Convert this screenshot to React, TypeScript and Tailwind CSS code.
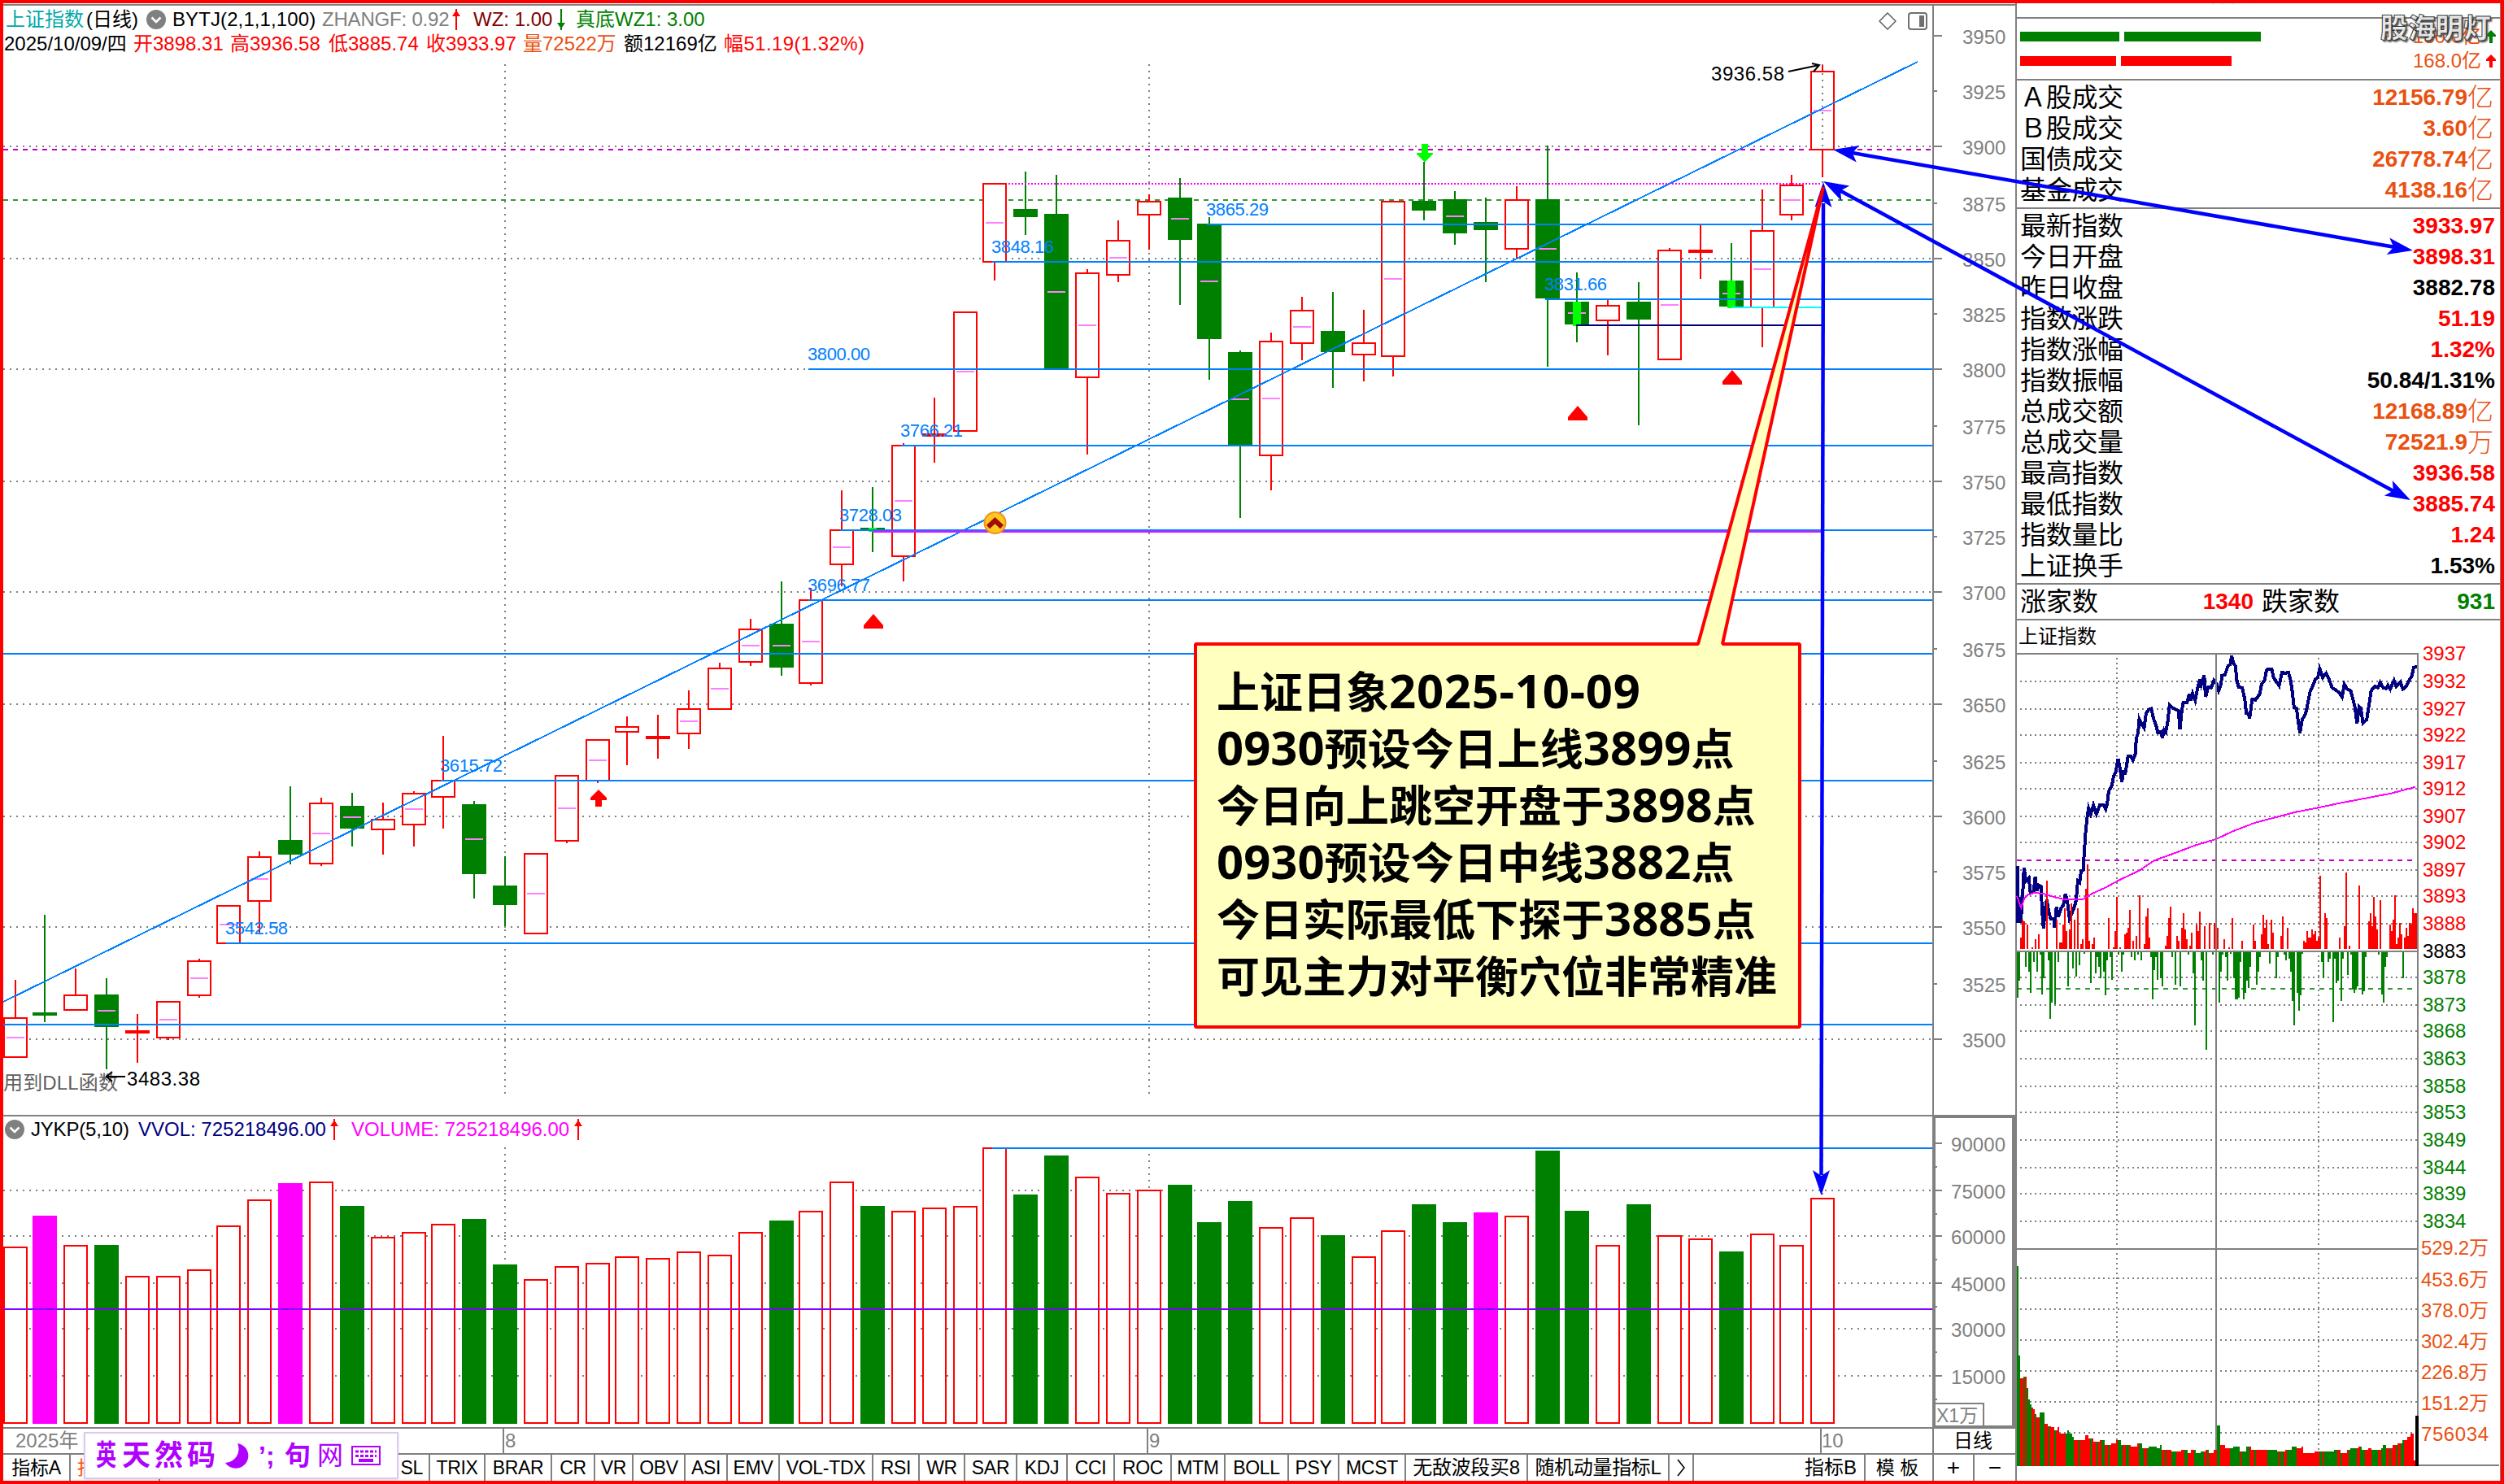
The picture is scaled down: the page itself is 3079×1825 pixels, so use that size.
import React from "react";

type Kind = "R" | "G" | "T";
// kind, body top, body bottom, high, low, show mid mark
type Candle = [Kind, number, number, number, number, number];

const RED = "#ff0000";
const GREEN = "#008000";
const GRAY = "#808080";
const BLUE = "#0080ff";
const MAGENTA = "#ff00ff";

const candles: Candle[] = [
  ["R", 1251, 1301, 1205, 1301, 1], ["G", 1245, 1249, 1125, 1257, 0], ["R", 1223, 1243, 1191, 1243, 0],
  ["G", 1223, 1263, 1203, 1315, 1], ["T", 1267, 1271, 1247, 1307, 0], ["R", 1231, 1277, 1231, 1279, 1],
  ["R", 1181, 1225, 1179, 1227, 1], ["R", 1113, 1161, 1113, 1161, 1], ["R", 1053, 1109, 1047, 1147, 1],
  ["G", 1033, 1051, 967, 1063, 0], ["R", 987, 1063, 981, 1065, 1], ["G", 991, 1019, 975, 1041, 1],
  ["R", 1007, 1021, 987, 1051, 0], ["R", 975, 1015, 973, 1041, 1], ["R", 959, 981, 905, 1019, 0],
  ["G", 989, 1075, 985, 1105, 1], ["G", 1089, 1113, 1053, 1139, 0], ["R", 1049, 1149, 1049, 1149, 1],
  ["R", 953, 1035, 953, 1037, 1], ["R", 909, 961, 909, 963, 1], ["R", 893, 901, 881, 941, 0],
  ["T", 905, 909, 879, 933, 0], ["R", 871, 903, 849, 921, 1], ["R", 821, 873, 815, 873, 1],
  ["R", 773, 815, 761, 819, 1], ["G", 767, 821, 715, 831, 1], ["R", 737, 841, 723, 843, 1],
  ["R", 651, 695, 603, 721, 1], ["G", 649, 652, 599, 679, 0], ["R", 547, 685, 545, 715, 1],
  ["T", 533, 537, 489, 569, 0], ["R", 383, 531, 383, 531, 1], ["R", 225, 323, 225, 345, 1],
  ["G", 257, 267, 211, 289, 0], ["G", 263, 454, 215, 454, 1], ["R", 335, 465, 331, 559, 1],
  ["R", 295, 339, 271, 347, 1], ["R", 247, 265, 239, 307, 0], ["G", 243, 295, 219, 375, 1],
  ["G", 275, 417, 267, 467, 1], ["G", 433, 548, 431, 637, 1], ["R", 419, 561, 409, 603, 1],
  ["R", 381, 423, 365, 443, 1], ["G", 407, 433, 359, 477, 0], ["R", 421, 437, 381, 469, 0],
  ["R", 247, 439, 247, 463, 1], ["G", 247, 259, 199, 271, 0], ["G", 245, 287, 235, 301, 1],
  ["G", 273, 283, 243, 347, 0], ["R", 245, 307, 229, 318, 0], ["G", 245, 367, 179, 451, 1],
  ["G", 371, 399, 335, 421, 1], ["R", 375, 395, 368, 437, 0], ["G", 371, 393, 347, 523, 0],
  ["R", 307, 443, 305, 443, 1], ["T", 307, 311, 277, 343, 0], ["G", 345, 377, 299, 377, 1],
  ["R", 283, 379, 233, 427, 1], ["R", 227, 265, 215, 271, 1], ["R", 87, 185, 80, 218, 1],
];

const volumes: [string, number][] = [
  ["R", 1533], ["M", 1495], ["R", 1531], ["G", 1531], ["R", 1569], ["R", 1569], ["R", 1561], ["R", 1507],
  ["R", 1475], ["M", 1455], ["R", 1453], ["G", 1483], ["R", 1521], ["R", 1515], ["R", 1505], ["G", 1499],
  ["G", 1555], ["R", 1573], ["R", 1557], ["R", 1553], ["R", 1545], ["R", 1547], ["R", 1539], ["R", 1543],
  ["R", 1515], ["G", 1501], ["R", 1489], ["R", 1453], ["G", 1483], ["R", 1489], ["R", 1485], ["R", 1483],
  ["R", 1411], ["G", 1469], ["G", 1421], ["R", 1447], ["R", 1467], ["R", 1463], ["G", 1457], ["G", 1503],
  ["G", 1477], ["R", 1509], ["R", 1497], ["G", 1519], ["R", 1545], ["R", 1513], ["G", 1481], ["G", 1503],
  ["M", 1491], ["R", 1495], ["G", 1415], ["G", 1489], ["R", 1531], ["G", 1481], ["R", 1519], ["R", 1523],
  ["G", 1539], ["R", 1517], ["R", 1531], ["R", 1473],
];

const shifts = [1, 7, 14, 20, 26, 32, 39, 45, 51, 58];
const cx = (i: number) => 19 + 38 * i - 2 * shifts.filter((s) => s <= i).length;

const priceTicks: [number, number][] = [
  [3950, 44], [3925, 112], [3900, 180], [3875, 250], [3850, 318], [3825, 386], [3800, 454], [3775, 524],
  [3750, 592], [3725, 660], [3700, 728], [3675, 798], [3650, 866], [3625, 936], [3600, 1004], [3575, 1072],
  [3550, 1140], [3525, 1210], [3500, 1278],
];

const levels: [string, number, number, number][] = [
  ["3542.58", 278, 1160, 1141], ["3615.72", 542, 960, 941], ["3696.77", 994, 738, 719],
  ["3728.03", 1033, 652, 633], ["3766.21", 1108, 548, 529], ["3800.00", 994, 454, 435],
  ["3848.16", 1220, 322, 303], ["3831.66", 1900, 368, 349], ["3865.29", 1484, 276, 257],
];

function PriceChart() {
  return (
    <svg className="block shrink-0" width="2372" height="1301" viewBox="4 70 2372 1301" shapeRendering="crispEdges">
      <g stroke={GRAY} strokeWidth="2" strokeDasharray="2 6">
        {priceTicks.filter(([p]) => p % 50 === 0 && p < 3950).map(([p, y]) => (
          <line key={p} x1="4" x2="2376" y1={y} y2={y} />
        ))}
        <line x1="621" x2="621" y1="79" y2="1346" />
        <line x1="1413" x2="1413" y1="79" y2="1346" />
        <line x1="2241" x2="2241" y1="79" y2="1346" />
      </g>
      <line x1="4" x2="2376" y1="184" y2="184" stroke="#c000c0" strokeWidth="2" strokeDasharray="6 6" />
      <line x1="4" x2="2376" y1="246" y2="246" stroke="#339933" strokeWidth="2" strokeDasharray="6 6" />
      {candles.map(([k, t, b, h, l, m], i) => {
        const x = cx(i);
        const c = k === "G" ? GREEN : RED;
        return (
          <g key={i}>
            {h < t && <rect x={x - 1} y={h} width="2" height={t - h} fill={c} />}
            {l > b && <rect x={x - 1} y={b} width="2" height={l - b} fill={c} />}
            {k === "R" ? (
              <rect x={x - 14} y={t + 1} width="28" height={b - t - 2} fill="#ffffff" stroke={RED} strokeWidth="2" />
            ) : (
              <rect x={x - 15} y={t} width="30" height={b - t} fill={c} />
            )}
            {m === 1 && <rect x={x - 11} y={Math.round((t + b) / 2) - 1} width="22" height="2" fill="#ff80ff" />}
          </g>
        );
      })}
      <line x1="2241" x2="2241" y1="90" y2="184" stroke={GRAY} strokeWidth="2" strokeDasharray="2 6" />
      <rect x="1934" y="371" width="10" height="30" fill="#00ff00" />
      <rect x="2124" y="345" width="10" height="34" fill="#00ff00" />
      <rect x="1068" y="649" width="10" height="5" fill="#00ff00" />
      <g stroke={BLUE} strokeWidth="2">
        <line x1="4" x2="2376" y1="1260" y2="1260" />
        <line x1="4" x2="2376" y1="804" y2="804" />
        {levels.map(([n, x, y]) => <line key={n} x1={x} x2="2376" y1={y} y2={y} />)}
        <line x1="4" y1="1232" x2="2358" y2="76" />
      </g>
      <rect x="1073" y="653" width="1167" height="2" fill={MAGENTA} />
      <line x1="1240" x2="2240" y1="226" y2="226" stroke={MAGENTA} strokeWidth="2" strokeDasharray="2 2" />
      <line x1="2129" x2="2240" y1="378" y2="378" stroke="#00ffff" strokeWidth="2" />
      <line x1="1938" x2="2240" y1="400" y2="400" stroke="#000080" strokeWidth="2" />
      <g fill={BLUE} fontSize="22">
        {levels.map(([n, x, , ty]) => (
          <text key={n} x={x - 1} y={ty + 8} textLength="77">{n}</text>
        ))}
      </g>
      <g fill={RED} shapeRendering="auto">
        <path d="M1074 755L1062 769V773H1086V769Z" />
        <path d="M1940 499L1928 513V517H1952V513Z" />
        <path d="M2130 455L2118 469V473H2142V469Z" />
        <path d="M736 971L726 981V984H732V992H740V984H746V981Z" />
      </g>
      <path d="M1748 177H1756V188H1762V190L1752 199L1742 190V188H1748Z" fill="#00ff00" />
      <g shapeRendering="auto">
        <circle cx="1223.500" cy="643" r="13" fill="#ffc81e" stroke="#f09020" strokeWidth="2" />
        <path d="M1215 648L1223.500 640L1232 648" fill="none" stroke="#a00c08" strokeWidth="6" />
      </g>
      <g fill="#000000" stroke="none" fontSize="24">
        <text x="2104" y="99" textLength="90">3936.58</text>
        <text x="156" y="1335" textLength="90">3483.38</text>
      </g>
      <text x="4" y="1340" fill="#606060" fontSize="24" textLength="141">用到DLL函数</text>
      <g stroke="#000000" strokeWidth="2" fill="none" shapeRendering="auto">
        <path d="M2199 88L2237 80M2228 78L2237 80L2230 88" />
        <path d="M154 1324H130M138 1318L131 1324L138 1330" />
      </g>
    </svg>
  );
}

function PriceAxis() {
  return (
    <svg className="block" width="100" height="1364" viewBox="2378 7 100 1364" shapeRendering="crispEdges">
      {priceTicks.map(([p, y]) => (
        <g key={p}>
          <rect x="2378" y={y - 1} width={p % 50 === 0 ? 10 : 4} height="2" fill={GRAY} />
          <text x="2413" y={y + 10} fontSize="24" fill={GRAY}>{p}</text>
        </g>
      ))}
    </svg>
  );
}

function VolumeChart() {
  const fills: Record<string, string> = { G: GREEN, M: MAGENTA };
  return (
    <svg className="block" width="2372" height="348" viewBox="4 1407 2372 348" shapeRendering="crispEdges">
      <g stroke={GRAY} strokeWidth="2">
        {[1464, 1520, 1578, 1634, 1692].map((y) => (
          <line key={y} x1="4" x2="2376" y1={y} y2={y} strokeDasharray="2 6" />
        ))}
        {[621, 1413, 2241].map((x) => (
          <line key={x} x1={x} x2={x} y1="1411" y2="1751" strokeDasharray="2 6" />
        ))}
      </g>
      {volumes.map(([k, t], i) =>
        k === "R" ? (
          <rect key={i} x={cx(i) - 14} y={t + 1} width="28" height={1750 - t - 1} fill="#ffffff" stroke={RED} strokeWidth="2" />
        ) : (
          <rect key={i} x={cx(i) - 15} y={t} width="30" height={1751 - t} fill={fills[k]} />
        )
      )}
      <line x1="1220" x2="2376" y1="1412" y2="1412" stroke={BLUE} strokeWidth="2" />
      <line x1="4" x2="2376" y1="1610" y2="1610" stroke="#8000ff" strokeWidth="2" />
    </svg>
  );
}

function VolumeAxis() {
  const rows: [string, number][] = [["90000", 1406], ["75000", 1464], ["60000", 1520], ["45000", 1578], ["30000", 1634], ["15000", 1692]];
  return (
    <svg className="block" width="102" height="386" viewBox="2376 1371 102 386" shapeRendering="crispEdges">
      <rect x="2378" y="1373" width="98" height="382" fill="none" stroke={GRAY} strokeWidth="4" />
      {rows.map(([n, y]) => (
        <g key={n}>
          <rect x="2380" y={y - 1} width="8" height="2" fill={GRAY} />
          <rect x="2380" y={y + 28} width="2" height="2" fill={GRAY} />
          <text x="2399" y={y + 10} fontSize="24" fill={GRAY} textLength="67">{n}</text>
        </g>
      ))}
      <rect x="2379" y="1726" width="60" height="28" fill="#ffffff" stroke={GRAY} strokeWidth="2" />
      <text x="2381" y="1749" fontSize="23" fill={GRAY}>X1万</text>
    </svg>
  );
}

const redBars = "272:1100,277:1040,281:1045,290:1055,303:1133,311:1105,320:1088,342:905,368:1040,377:1117,381:1117,386:1055,390:1000,394:1078,403:1072,408:983,417:1040,425:1000,434:1122,438:1106,447:932,451:848,455:1112,464:1122,468:1100,508:1033,521:1133,526:1078,530:960,538:1133,552:1090,556:1083,560:1067,565:1005,574:1112,582:1095,590:955,604:1122,608:1028,613:1000,617:1100,661:1128,665:1095,670:1033,674:994,691:1095,696:1112,705:1067,709:1016,713:1072,718:1106,726:1128,731:1083,744:1055,748:1078,752:1010,766:1060,779:1050,792:1050,800:1067,818:1106,831:1133,840:1033,866:1112,896:1055,900:1112,918:1090,922:1022,927:1067,931:1038,935:1122,944:1038,948:1083,970:1095,975:1028,988:1067,1031:1112,1036:1117,1040:1078,1044:1100,1049:1100,1053:1072,1057:1090,1062:1078,1066:1112,1071:1100,1075:888,1088:1016,1092:1033,1127:1100,1140:1060,1145:877,1153:1128,1180:921,1206:1045,1210:1016,1215:1060,1219:960,1223:1028,1228:1072,1236:972,1263:1055,1267:1078,1271:1038,1276:955,1280:1122,1284:1100,1289:1050,1293:1088,1302:1100,1306:1067,1311:1095,1315:1050,1319:1055,1324:1000,1328:1016,1332:1016,1336:1022";
const greenBars = "264:1308,268:1250,285:1200,294:1217,298:1290,307:1184,316:1217,325:1160,329:1295,333:1240,346:1178,351:1380,355:1323,364:1330,373:1184,399:1268,412:1206,420:1235,430:1195,442:1155,460:1256,473:1223,478:1167,482:1200,486:1240,495:1217,499:1300,504:1178,512:1167,517:1245,534:1160,543:1217,548:1160,569:1167,578:1178,587:1160,596:1178,622:1167,626:1312,630:1212,635:1167,639:1245,648:1240,652:1268,678:1167,687:1262,700:1268,722:1160,735:1223,739:1402,757:1178,761:1250,770:1486,787:1160,805:1323,809:1217,813:1160,822:1167,826:1250,835:1155,844:1240,848:1312,853:1312,857:1308,861:1184,870:1312,874:1290,879:1250,883:1273,887:1200,905:1262,909:1217,913:1167,940:1190,957:1240,962:1167,979:1160,984:1178,992:1172,997:1217,1001:1318,1006:1402,1014:1290,1019:1352,1023:1300,1027:1155,1080:1184,1084:1240,1097:1184,1101:1172,1110:1391,1114:1172,1119:1256,1123:1250,1132:1318,1136:1172,1149:1228,1158:1160,1162:1278,1167:1290,1171:1280,1175:1268,1189:1295,1193:1284,1197:1167,1232:1160,1241:1295,1245:1323,1250:1200,1254:1167,1298:1240";
const priceLine = "264,855 264,1050 268,960 272,1050 277,960 281,860 286,905 294,895 298,945 307,940 311,890 315,940 320,920 327,925 329,1000 333,1068 338,1000 342,970 347,1010 352,1035 361,1035 363,1065 368,995 373,1028 380,1000 386,990 392,950 397,975 403,1035 410,1015 417,990 421,970 425,905 430,910 434,872 440,868 442,815 446,740 450,690 454,655 460,675 467,645 475,675 484,645 495,645 500,658 504,640 508,597 517,575 521,545 527,530 533,485 538,515 543,565 548,525 552,540 560,475 567,475 573,490 579,470 582,415 587,395 590,348 596,365 603,378 608,330 615,315 622,312 628,345 635,370 640,395 648,392 652,412 657,385 661,392 666,360 671,300 680,310 695,320 699,383 704,320 708,290 718,290 724,262 728,284 733,260 740,284 745,250 752,212 756,230 764,198 768,272 775,238 783,240 790,215 797,225 803,250 809,230 812,198 820,195 828,165 834,160 838,130 842,155 848,165 851,210 856,238 866,240 873,280 877,328 882,330 886,345 893,280 902,282 913,262 918,228 926,215 931,180 936,175 945,175 950,205 957,218 965,233 973,187 981,190 990,187 996,215 1001,260 1005,308 1012,312 1016,355 1021,396 1027,350 1036,330 1041,300 1048,255 1055,235 1062,212 1069,205 1074,175 1082,205 1091,190 1098,208 1107,240 1116,247 1127,258 1134,272 1140,228 1147,245 1157,250 1164,285 1168,305 1174,362 1180,305 1184,310 1190,362 1200,350 1206,300 1212,250 1222,235 1230,240 1236,222 1244,240 1252,243 1257,232 1263,245 1273,215 1279,235 1290,220 1297,245 1306,235 1314,213 1321,200 1326,170 1337,168";
const avgLine = "262,958 268,980 273,998 282,965 292,953 310,946 335,950 360,960 385,968 440,968 462,950 500,928 540,900 590,870 630,835 680,812 740,783 797,761 840,735 900,705 960,685 1010,668 1071,653 1130,637 1200,620 1265,604 1330,582";
const volSteps: [number, number][] = [
  [264, 768], [268, 1097], [274, 1180], [280, 1174], [288, 1216], [293, 1257], [298, 1275], [303, 1287], [308, 1293], [312, 1311], [318, 1322], [325, 1305], [333, 1305], [340, 1347], [348, 1356], [356, 1360], [363, 1372], [371, 1360], [378, 1383], [390, 1383], [397, 1370], [405, 1383], [412, 1395], [418, 1407], [440, 1407], [447, 1389], [455, 1400], [470, 1413], [485, 1407], [500, 1425], [515, 1419], [530, 1407], [545, 1425], [570, 1430], [588, 1419], [600, 1437], [615, 1430], [640, 1437], [646, 1425], [652, 1443], [680, 1449], [705, 1443], [720, 1455], [732, 1443], [745, 1455], [755, 1449], [768, 1443], [780, 1455], [790, 1443], [801, 1353], [808, 1425], [820, 1437], [845, 1430], [860, 1449], [877, 1431], [890, 1443], [960, 1449], [985, 1443], [1000, 1431], [1015, 1437], [1025, 1431], [1032, 1455], [1060, 1449], [1095, 1449], [1115, 1443], [1130, 1455], [1150, 1443], [1160, 1437], [1178, 1431], [1190, 1443], [1205, 1437], [1215, 1443], [1240, 1437], [1247, 1425], [1255, 1437], [1270, 1425], [1285, 1419], [1296, 1407], [1305, 1407], [1312, 1395], [1321, 1383], [1328, 1483],
];
const greenVol: [number, number][] = [[262, 269], [281, 285], [290, 300], [308, 312], [322, 336], [344, 350], [361, 365], [391, 413], [429, 433], [459, 464], [474, 478], [490, 498], [507, 511], [533, 546], [556, 562], [590, 602], [612, 650], [660, 664], [675, 690], [712, 718], [738, 762], [770, 776], [797, 806], [833, 858], [864, 886], [898, 904], [935, 962], [968, 976], [988, 1012], [1075, 1082], [1088, 1122], [1132, 1136], [1150, 1174], [1184, 1196], [1214, 1232], [1238, 1252], [1262, 1266], [1280, 1284], [1292, 1302]];

const ix = (v: number) => 2360 + v / 2.181;
const iy = (v: number) => 760 + v / 2.8;
const vy = (v: number) => 1300 + v / 2.987;
const mapLine = (s: string) => s.split(" ").map((p) => { const [a, b] = p.split(",").map(Number); return `${ix(a).toFixed(1)},${iy(b).toFixed(1)}`; }).join(" ");
const parseBars = (s: string) => s.split(",").map((p) => p.split(":").map(Number));

const minuteTicks: [string, number, string][] = [
  ["3937", 804, RED], ["3932", 838, RED], ["3927", 872, RED], ["3922", 904, RED], ["3917", 938, RED], ["3912", 970, RED],
  ["3907", 1004, RED], ["3902", 1036, RED], ["3897", 1070, RED], ["3893", 1102, RED], ["3888", 1136, RED], ["3883", 1170, "#000000"],
  ["3878", 1202, GREEN], ["3873", 1236, GREEN], ["3868", 1268, GREEN], ["3863", 1302, GREEN], ["3858", 1336, GREEN], ["3853", 1368, GREEN],
  ["3849", 1402, GREEN], ["3844", 1436, GREEN], ["3839", 1468, GREEN], ["3834", 1502, GREEN],
];
const minuteVol: [string, number][] = [["529.2万", 1536], ["453.6万", 1575], ["378.0万", 1613], ["302.4万", 1651], ["226.8万", 1689], ["151.2万", 1727], ["756034", 1765]];

function IntradayChart() {
  const bars: React.ReactElement[] = [];
  for (let k = 0, v = 264; v < 1331; v += 4.362, k++) {
    let top = 768;
    for (const [sx, sy] of volSteps) if (sx <= v + 2) top = sy;
    const g = greenVol.some(([a, b]) => v >= a && v <= b);
    const x = 2480 + k * 2;
    bars.push(<rect key={k} x={x} y={vy(top)} width="2" height={vy(1501) - vy(top)} fill={g ? GREEN : RED} />);
  }
  return (
    <svg className="block shrink-0 overflow-visible" width="595" height="1018" viewBox="2480 803 595 1018" shapeRendering="crispEdges">
      <g stroke={GRAY} strokeWidth="2">
        {minuteTicks.slice(1).filter(([n]) => n !== "3883").map(([n, y]) => (
          <line key={n} x1="2484" x2="2973" y1={y} y2={y} strokeDasharray="2 4" />
        ))}
        {[1572, 1610, 1648, 1686, 1724, 1762].map((y) => (
          <line key={y} x1="2484" x2="2973" y1={y} y2={y} strokeDasharray="2 4" />
        ))}
        <line x1="2603" x2="2603" y1="809" y2="1800" strokeDasharray="2 4" />
        <line x1="2851" x2="2851" y1="809" y2="1800" strokeDasharray="2 4" />
      </g>
      <line x1="2480" x2="2969" y1="1058" y2="1058" stroke="#c000c0" strokeWidth="2" strokeDasharray="6 6" />
      <line x1="2480" x2="2969" y1="1216" y2="1216" stroke="#339933" strokeWidth="2" strokeDasharray="6 6" />
      <polyline points={mapLine(priceLine)} fill="none" stroke="#000080" strokeWidth="4" />
      {parseBars(redBars).map(([x, t]) => (
        <rect key={x} x={Math.round(ix(x)) - 1} y={iy(t)} width="2" height={1167 - iy(t)} fill={RED} />
      ))}
      {parseBars(greenBars).map(([x, b]) => (
        <rect key={x} x={Math.round(ix(x)) - 1} y="1169" width="2" height={iy(b) - 1169} fill={GREEN} />
      ))}
      <polyline points={mapLine(avgLine)} fill="none" stroke={MAGENTA} strokeWidth="2" />
      <g fill={GRAY}>
        <rect x="2480" y="803" width="494" height="2" />
        <rect x="2724" y="804" width="2" height="996" />
        <rect x="2972" y="804" width="2" height="997" />
        <rect x="2480" y="1169" width="494" height="2" />
        <rect x="2480" y="1535" width="494" height="2" />
        <rect x="2974" y="1801" width="99" height="2" />
      </g>
      {bars}
      <rect x="2970" y="1741" width="4" height="62" fill="#000000" />
      {minuteTicks.map(([n, y, c]) => <text key={n} x="2979" y={y + 8} fontSize="24" fill={c}>{n}</text>)}
      {minuteVol.map(([n, y]) => <text key={n} x="2977" y={y + 7} fontSize="24" textLength={n.length > 6 ? undefined : 83} fill="#ea5010">{n}</text>)}
    </svg>
  );
}

function QuoteRow({ label, value, unit, tone }: { label: string; value: string; unit?: string; tone: string }) {
  return (
    <div className={`flex h-[38px] items-center justify-between pl-1 ${unit ? "pr-[8px]" : "pr-[6px]"}`}>
      <span className="text-[32px] leading-[38px] tracking-[-0.3px] text-black">{label}</span>
      <span className={`flex items-center leading-[38px] ${tone}`}>
        <b className="text-[28px]">{value}</b>
        {unit && <span className="text-[32px] font-light">{unit}</span>}
      </span>
    </div>
  );
}

function Collapse() {
  return (
    <svg className="shrink-0" width="24" height="24" viewBox="0 0 24 24">
      <circle cx="12" cy="12" r="12" fill={GRAY} />
      <path d="M6.500 9.500L12 15L17.500 9.500" fill="none" stroke="#fff" strokeWidth="2.500" />
    </svg>
  );
}

function Arrow({ color, down = false, thin = true }: { color: string; down?: boolean; thin?: boolean }) {
  return (
    <svg className={`shrink-0 ${down ? "rotate-180" : ""}`} width={thin ? 10 : 12} height={thin ? 26 : 16} viewBox={thin ? "0 0 10 26" : "0 0 12 16"}>
      {thin ? <path d="M4 0H6V3L10 9H6V26H4V9H0L4 3Z" fill={color} /> : <path d="M6 0L12 6V8H8V16H4V8H0V6Z" fill={color} />}
    </svg>
  );
}

function Slot({ w, c, children }: { w: string; c: string; children: React.ReactNode }) {
  return <span className={`shrink-0 ${w} ${c}`}>{children}</span>;
}

const tabs: [string, string, string][] = [
  ["w-[83px]", "指标A", "text-black"], ["w-[110px]", "指", "text-[#ff5000] pl-2 !justify-start"], ["w-[332px]", "SL", "text-black !justify-end pr-[7px]"],
  ["w-[68px]", "TRIX", ""], ["w-[82px]", "BRAR", ""], ["w-[53px]", "CR", ""], ["w-[47px]", "VR", ""], ["w-[64px]", "OBV", ""], ["w-[52px]", "ASI", ""],
  ["w-[64px]", "EMV", ""], ["w-[115px]", "VOL-TDX", ""], ["w-[57px]", "RSI", ""], ["w-[56px]", "WR", ""], ["w-[64px]", "SAR", ""], ["w-[62px]", "KDJ", ""],
  ["w-[58px]", "CCI", ""], ["w-[70px]", "ROC", ""], ["w-[66px]", "MTM", ""], ["w-[78px]", "BOLL", ""], ["w-[62px]", "PSY", ""], ["w-[82px]", "MCST", ""],
  ["w-[150px]", "无敌波段买8", "text-[24px]"], ["w-[174px]", "随机动量指标L", "text-[24px]"],
];

function ArrowTip({ x, y, a }: { x: number; y: number; a: number }) {
  return <path d="M0 0L-31 -10.500L-24 0L-31 10.500Z" fill="#0000ff" transform={`translate(${x} ${y}) rotate(${a})`} />;
}

const noteLines = [
  ["上证日象", "2025-10-09"], ["0930", "预设今日上线", "3899", "点"], ["今日向上跳空开盘于", "3898", "点"],
  ["0930", "预设今日中线", "3882", "点"], ["今日实际最低下探于", "3885", "点"], ["可见主力对平衡穴位非常精准"],
];

export default function App() {
  return (
    <div className="relative flex h-[1825px] w-[3079px] overflow-hidden border-4 border-[#ff0000] bg-white font-['Liberation_Sans','Noto_Sans_CJK_SC',sans-serif] text-[24px] text-black">
      <main className="flex w-[2476px] shrink-0 flex-col border-r-2 border-[#808080]">
        <section className="mt-px flex h-[1366px] border-t-2 border-[#808080]">
          <div className="flex w-[2374px] flex-col border-r-2 border-[#808080]">
            <header className="flex h-[63px] shrink-0 justify-between whitespace-nowrap">
              <div>
                <div className="flex h-[34px] items-center pl-[3px] leading-[34px]">
                  <Slot w="w-[99px]" c="text-[#00a8a8]">上证指数</Slot>
                  <Slot w="w-[74px]" c="">(日线)</Slot>
                  <Collapse />
                  <Slot w="w-[188px]" c="pl-[8px] tracking-[0.1px]">BYTJ(2,1,1,100)</Slot>
                  <Slot w="w-[164px]" c="text-[#808080] tracking-[-0.2px]"><span className="ml-1">ZHANGF: 0.92</span></Slot>
                  <Arrow color={RED} />
                  <Slot w="w-[119px]" c="pl-[16px] text-[#800000]">WZ: 1.00</Slot>
                  <Arrow color={GREEN} down />
                  <Slot w="w-[190px]" c="pl-[13px] text-[#008000]">真底WZ1: 3.00</Slot>
                </div>
                <div className="flex h-[26px] items-center pl-px leading-[26px]">
                  <Slot w="w-[159px]" c="">2025/10/09/四</Slot>
                  <Slot w="w-[119px]" c="text-[#ff0000]">开3898.31</Slot>
                  <Slot w="w-[121px]" c="text-[#ff0000]">高3936.58</Slot>
                  <Slot w="w-[120px]" c="text-[#ff0000]">低3885.74</Slot>
                  <Slot w="w-[119px]" c="text-[#ff0000]">收3933.97</Slot>
                  <Slot w="w-[124px]" c="text-[#ea5010]">量72522万</Slot>
                  <Slot w="w-[123px]" c="">额12169亿</Slot>
                  <Slot w="w-[180px]" c="text-[#ff0000] tracking-[0.4px]">幅51.19(1.32%)</Slot>
                </div>
              </div>
              <div className="flex gap-[14px] pr-[6px] pt-[8px]">
                <svg width="22" height="22" viewBox="0 0 22 22"><path d="M11 1L21 11L11 21L1 11Z" fill="none" stroke="#606060" strokeWidth="1.500" /></svg>
                <svg width="24" height="22" viewBox="0 0 24 22"><rect x="1" y="1" width="22" height="20" rx="3" fill="none" stroke="#707070" strokeWidth="2" /><rect x="14" y="4" width="6" height="14" fill="#707070" /></svg>
              </div>
            </header>
            <PriceChart />
          </div>
          <PriceAxis />
        </section>
        <section className="flex h-[386px]">
          <div className="flex w-[2372px] flex-col border-y-2 border-[#808080]">
            <div className="flex h-[34px] shrink-0 items-center whitespace-nowrap pl-[2px] pb-[3px] leading-[32px]">
              <Collapse />
              <Slot w="w-[132px]" c="pl-[8px] tracking-[-0.2px]">JYKP(5,10)</Slot>
              <Slot w="w-[244px]" c="pl-[8px] text-[#000080]">VVOL: 725218496.00</Slot>
              <Arrow color={RED} />
              <Slot w="w-[290px]" c="pl-[16px] text-[#ff00ff]">VOLUME: 725218496.00</Slot>
              <Arrow color={RED} />
            </div>
            <VolumeChart />
          </div>
          <VolumeAxis />
        </section>
        <section className="flex h-[30px] text-[24px] leading-[30px] text-[#808080]">
          <div className="flex w-[2374px] border-r-2 border-[#808080]">
            <div className="w-[614px] pl-[15px]">2025年</div>
            <div className="w-[792px] border-l-2 border-[#808080] pl-px">8</div>
            <div className="w-[828px] border-l-2 border-[#808080] pl-px">9</div>
            <div className="grow border-l-2 border-[#808080]">10</div>
          </div>
          <div className="grow pr-[4px] text-center text-black">日线</div>
        </section>
        <nav className="flex h-[34px] border-t-2 border-[#808080] text-[23px] leading-[32px]">
          <div className="flex w-[2374px] border-r-2 border-[#808080]">
            {tabs.map(([w, name, extra]) => (
              <div key={name} className={`flex shrink-0 justify-center overflow-hidden whitespace-nowrap border-r-2 border-[#808080] tracking-[-0.3px] ${w} ${extra}`}>{name}</div>
            ))}
            <div className="flex w-[30px] items-center justify-center border-r-2 border-[#808080]">
              <svg width="10" height="22" viewBox="0 0 10 22"><path d="M1 1L9 11L1 21" fill="none" stroke="#000" strokeWidth="1.600" /></svg>
            </div>
            <div className="grow whitespace-nowrap border-r-2 border-[#808080] pr-[9px] text-right text-[24px]">指标B</div>
            <div className="w-[82px] whitespace-nowrap pr-[4px] text-center">模 板</div>
          </div>
          <div className="w-[50px] border-r-2 border-[#808080] text-center text-[28px]">+</div>
          <div className="grow text-center text-[28px]">−</div>
        </nav>
      </main>

      <aside className="flex w-[595px] flex-col border-r border-[#808080]">
        <div className="flex h-[19px] shrink-0 items-end justify-center overflow-hidden border-b-2 border-[#808080]">
          <span className="h-full pr-[120px] text-[32px] leading-[0] text-[#00a8a8]"><span className="relative top-[-14px]">上证指数</span></span>
        </div>
        <div className="h-[76px] shrink-0 border-b-2 border-[#808080] pl-1 pr-[5px]">
          <div className="flex h-[44px] items-center gap-[6px]">
            <div className="h-3 w-[122px] bg-[#008000]" />
            <div className="h-3 w-[168px] bg-[#008000]" />
            <span className="ml-auto text-[24px] text-[#ea5010]">180.0亿</span>
            <Arrow color={GREEN} thin={false} />
          </div>
          <div className="flex h-[16px] items-center gap-[6px]">
            <div className="h-3 w-[118px] bg-[#ff0000]" />
            <div className="h-3 w-[136px] bg-[#ff0000]" />
            <span className="ml-auto text-[24px] text-[#ea5010]">168.0亿</span>
            <Arrow color={RED} thin={false} />
          </div>
        </div>
        <div className="h-[158px] shrink-0 border-b-2 border-[#808080] pt-[2px]">
          <QuoteRow label="Ａ股成交" value="12156.79" unit="亿" tone="text-[#ea5010]" />
          <QuoteRow label="Ｂ股成交" value="3.60" unit="亿" tone="text-[#ea5010]" />
          <QuoteRow label="国债成交" value="26778.74" unit="亿" tone="text-[#ea5010]" />
          <QuoteRow label="基金成交" value="4138.16" unit="亿" tone="text-[#ea5010]" />
        </div>
        <div className="h-[462px] shrink-0 border-b-2 border-[#808080] pt-[2px]">
          <QuoteRow label="最新指数" value="3933.97" tone="text-[#ff0000]" />
          <QuoteRow label="今日开盘" value="3898.31" tone="text-[#ff0000]" />
          <QuoteRow label="昨日收盘" value="3882.78" tone="text-black" />
          <QuoteRow label="指数涨跌" value="51.19" tone="text-[#ff0000]" />
          <QuoteRow label="指数涨幅" value="1.32%" tone="text-[#ff0000]" />
          <QuoteRow label="指数振幅" value="50.84/1.31%" tone="text-black" />
          <QuoteRow label="总成交额" value="12168.89" unit="亿" tone="text-[#ea5010]" />
          <QuoteRow label="总成交量" value="72521.9" unit="万" tone="text-[#ea5010]" />
          <QuoteRow label="最高指数" value="3936.58" tone="text-[#ff0000]" />
          <QuoteRow label="最低指数" value="3885.74" tone="text-[#ff0000]" />
          <QuoteRow label="指数量比" value="1.24" tone="text-[#ff0000]" />
          <QuoteRow label="上证换手" value="1.53%" tone="text-black" />
        </div>
        <div className="flex h-[44px] shrink-0 items-center border-b-2 border-[#808080] pl-1 pr-[6px]">
          <span className="text-[32px]">涨家数</span>
          <b className="w-[191px] text-right text-[28px] text-[#ff0000]">1340</b>
          <span className="ml-[10px] text-[32px]">跌家数</span>
          <b className="ml-auto text-[28px] text-[#008000]">931</b>
        </div>
        <div className="h-[40px] shrink-0 pl-[2px] text-[24px] leading-[40px]">上证指数</div>
        <IntradayChart />
      </aside>

      <svg className="pointer-events-none absolute -left-1 -top-1" width="3079" height="1825" viewBox="0 0 3079 1825">
        <g stroke="#0000ff" strokeWidth="4.500">
          <line x1="2275" y1="187.500" x2="2945" y2="304" />
          <line x1="2260" y1="233" x2="2945" y2="605" />
          <line x1="2242" y1="250" x2="2239.500" y2="1445" />
        </g>
        <ArrowTip x={2254} y={184} a={189.800} />
        <ArrowTip x={2967} y={308} a={9.800} />
        <ArrowTip x={2242} y={223} a={208.500} />
        <ArrowTip x={2964} y={615} a={28.500} />
        <ArrowTip x={2242} y={224} a={270} />
        <ArrowTip x={2239.500} y={1470} a={90} />
        <path d="M1470 792H2088L2242 230L2118 792H2213V1263H1470Z" fill="#ffffc0" stroke="#ff0000" strokeWidth="4" strokeLinejoin="bevel" />
      </svg>

      <div className="absolute left-[1492px] top-[809px] whitespace-nowrap font-['Noto_Sans_CJK_SC'] text-[53px] font-bold leading-[70px]">
        {noteLines.map((parts, i) => (
          <div key={i} className="h-[70px]">
            {parts.map((p, j) =>
              /^\d/.test(p) ? (
                <span key={j} className={`font-['Noto_Sans'] text-[58px] leading-[0] ${i === 0 ? "tracking-[0.7px]" : ""}`}>{p}</span>
              ) : (
                <span key={j}>{p}</span>
              )
            )}
          </div>
        ))}
      </div>

      <div className="absolute left-[2923px] top-[8px] text-[34px] font-black leading-[46px] text-white/80 [-webkit-text-stroke:1px_#333] [text-shadow:2px_2px_2px_#555]">股海明灯</div>

      <div className="absolute left-[99px] top-[1757px] flex h-[58px] w-[387px] items-center border-2 border-[#dcc8f0] bg-white pl-[13px] text-[35px] font-bold text-[#b000ff] shadow">
        <span className="w-[32px]"><span className="inline-block origin-left scale-x-[0.72]">英</span></span>
        <span className="w-[126px] whitespace-nowrap tracking-[5px]">天然码</span>
        <svg className="shrink-0" width="30" height="32" viewBox="0 0 30 32"><path d="M16 1A15.500 15.500 0 1 1 1 25A17 17 0 0 0 16 1Z" fill="#b000ff" /></svg>
        <span className="w-[44px] whitespace-nowrap pl-[12px] text-[32px]">’;</span>
        <span className="w-[40px] text-[32px]">句</span>
        <span className="w-[42px] text-[32px] font-normal">网</span>
        <svg className="shrink-0" width="36" height="24" viewBox="0 0 36 24">
          <rect x="1" y="1" width="34" height="22" fill="none" stroke="#b000ff" strokeWidth="2" />
          <path d="M5 7H31M5 12.500H31" stroke="#b000ff" strokeWidth="3" strokeDasharray="4 2" />
          <path d="M9 18H27" stroke="#b000ff" strokeWidth="4" />
        </svg>
      </div>
    </div>
  );
}
